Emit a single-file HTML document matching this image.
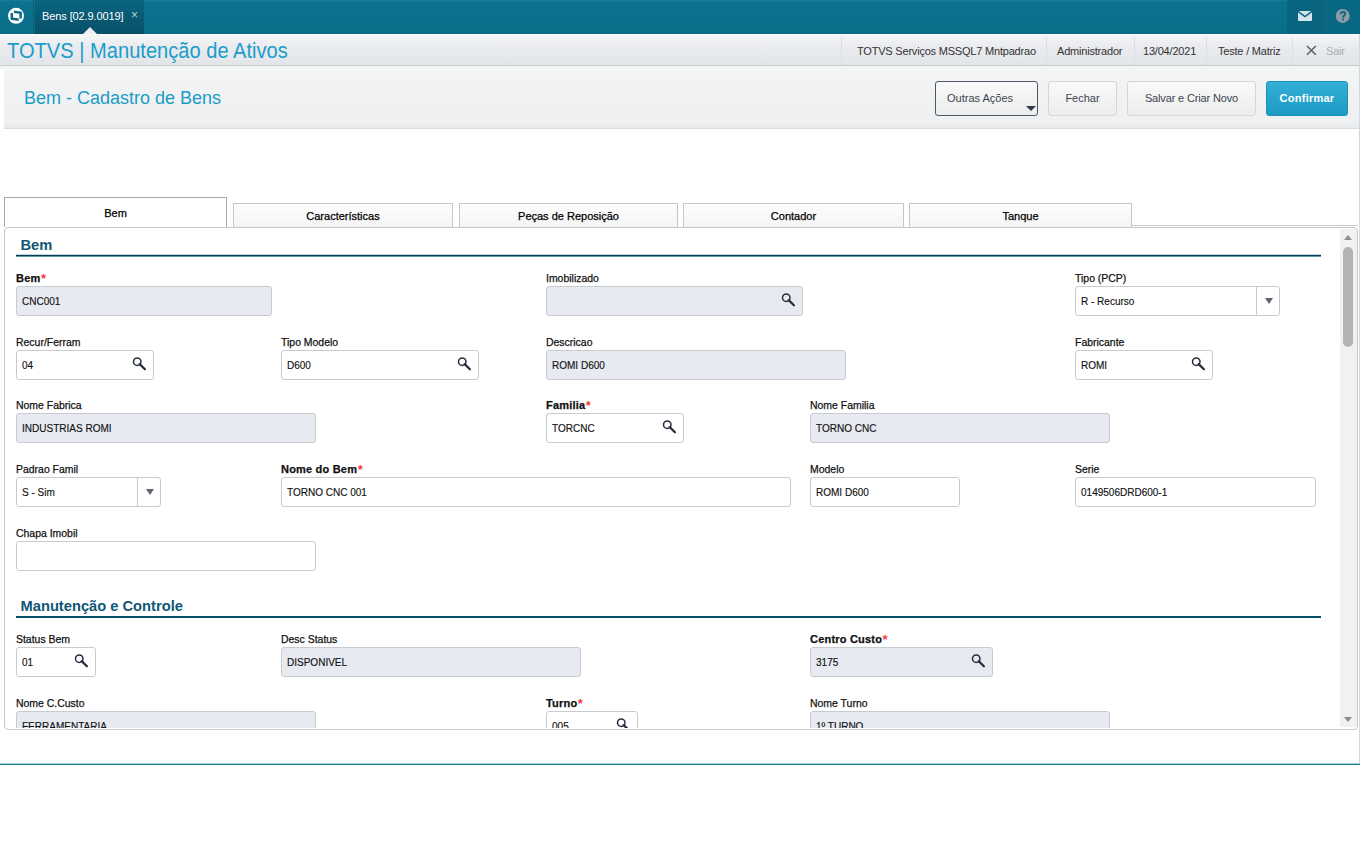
<!DOCTYPE html>
<html><head><meta charset="utf-8">
<style>
*{box-sizing:border-box;margin:0;padding:0}
html,body{width:1360px;height:850px;overflow:hidden;background:#fff;font-family:"Liberation Sans",sans-serif;color:#222}
.abs{position:absolute}
#topbar{position:absolute;left:0;top:0;width:1360px;height:34px;background:linear-gradient(#1a7e97,#0b718c 2px,#0a6e89)}
#logo{position:absolute;left:0;top:0;width:34px;height:34px;background:linear-gradient(#1a7e97,#0b718c 2px,#0a6e89);border-right:1px solid #0a5e76}
#acttab{position:absolute;left:35px;top:0;width:109px;height:34px;background:linear-gradient(#0b6580,#074f67)}
#acttab span{position:absolute;left:7px;top:10px;font-size:11px;color:#fff;letter-spacing:-0.1px}
#acttab i{position:absolute;left:96px;top:8px;font-style:normal;font-size:12px;color:#b8ccd4}
#ptr{position:absolute;left:48px;top:27px;width:0;height:0;border-left:7px solid transparent;border-right:7px solid transparent;border-bottom:7px solid #eceef0}
#mail{position:absolute;left:1287px;top:0;width:37px;height:34px;background:#076580;border-right:1px solid #2f5b68}
#help{position:absolute;left:1324px;top:0;width:36px;height:34px;background:#086884}
#titlebar{position:absolute;left:0;top:34px;width:1360px;height:32px;background:linear-gradient(#f6f7f8,#e9ebee 40%,#e3e6e9);border-bottom:1px solid #c9cdd0}
#gap{position:absolute;left:0;top:66px;width:1360px;height:3px;background:#f3f4f5}
#titlebar .t{position:absolute;left:7px;top:5px;font-size:21.5px;color:#1a9dca;transform:scaleX(.935);transform-origin:0 0;white-space:nowrap}
.ti{position:absolute;top:11px;font-size:11px;color:#333;letter-spacing:-0.2px}
.sep{position:absolute;top:3px;width:1px;height:28px;background:#dcdee0}
#hdr{position:absolute;left:4px;top:66px;width:1356px;height:63px;background:linear-gradient(#f3f4f4,#eff0f1 90%,#e8eaea);border-bottom:1px solid #dcdede;border-top-left-radius:3px}
#hdr .t{position:absolute;left:20px;top:22px;font-size:18px;color:#1b9cc8}
.btn{position:absolute;top:15px;height:35px;border:1px solid #d4d6d8;border-radius:3px;background:linear-gradient(#f9f9f9,#eceded);font-size:11px;color:#3d4350;text-align:center;line-height:33px}
#tabs .tab,#tabs2 .tab{position:absolute;top:203px;height:25px;border:1px solid #c6c6c6;border-bottom:none;background:linear-gradient(#fdfdfd,#f4f4f4);font-size:11px;text-align:center;line-height:24px;color:#000}
#tabs2 .tab.act{top:197px;height:30px;background:#fff;border-color:#a9a9a9;line-height:30px}
#panel{position:absolute;left:4px;top:227px;width:1354px;height:503px;border:1px solid #c8c8c8;border-radius:4px;background:#fff;overflow:hidden}
#clipin{position:absolute;left:0;top:0;width:1352px;height:500px;overflow:hidden}
#stripline{position:absolute;left:1132px;top:225px;width:226px;height:1px;background:#c8cacc}
#rline{position:absolute;left:1359px;top:34px;width:1px;height:730px;background:#c6dde5}
.sec{position:absolute;left:16px;width:1305px;height:2px;background:#0b4b66}
.sect{position:absolute;left:20.5px;font-size:14.7px;font-weight:bold;color:#0f5775;margin-top:1px}
.lbl{position:absolute;font-size:11px;color:#111;transform:scaleX(.95);transform-origin:0 0;white-space:nowrap;margin-top:1.6px;line-height:13px}
.lbl.b{font-weight:bold;transform:none;letter-spacing:0.2px;margin-top:1.6px}
.lbl .r{color:#f23b3b;font-size:13px;-webkit-text-stroke:0;line-height:0;position:relative;top:1px;margin-left:0.5px;letter-spacing:0}
.inp{position:absolute;height:30px;border:1px solid #c8cccf;border-radius:3px;background:#fff;font-size:11px;line-height:27px;padding-left:4.5px;color:#111}
.v{display:inline-block;transform:scaleX(.91);transform-origin:0 0;white-space:nowrap;position:relative;top:0.5px}
.inp.d{background:#e7eaf1}
.srch{position:absolute;right:7px;top:6px;width:14px;height:14px}
.sel .arr{position:absolute;right:0;top:0;width:23px;height:28px;border-left:1px solid #c9cbcd}
.sel .arr:after{content:"";position:absolute;left:8px;top:11px;border-left:4.5px solid transparent;border-right:4.5px solid transparent;border-top:6px solid #5f6672}
#bottomline{position:absolute;left:0;top:763px;width:1360px;height:2px;background:linear-gradient(#a9cfd8 50%,#1b7c95 50%)}
.lbl,.tab{-webkit-text-stroke:0.25px currentColor}
.v{-webkit-text-stroke:0.15px currentColor}
</style></head><body>
<div id="topbar"></div>
<div id="logo"><svg width="34" height="34" viewBox="0 0 34 34"><circle cx="16" cy="15.8" r="8" fill="#fff"/><path d="M13.9 10.6 L21.9 11.8 L21.8 18.6 L19.3 18.5 L19.4 13.8 L13.9 13.1 Z" fill="#0a6a85"/><path d="M10.5 13 L13.1 13.1 L13 17.6 L18.8 18.4 L18.7 20.9 L10.6 19.8 Z" fill="#0a6a85"/></svg></div>
<div id="acttab"><span>Bens [02.9.0019]</span><i>×</i><div id="ptr"></div></div>
<div id="mail"><svg width="36" height="34" viewBox="0 0 36 34"><rect x="11" y="11" width="14" height="10" rx="1" fill="#d3e5eb"/><path d="M11 11.3 L18 16.5 L25 11.3" fill="none" stroke="#076580" stroke-width="1.5"/></svg></div>
<div id="help"><svg width="36" height="34" viewBox="0 0 36 34"><circle cx="18.7" cy="15.9" r="7" fill="#8e9ba6"/><path d="M16.7 14.3 C16.7 12.6 17.7 12 18.9 12 C20.3 12 21.1 12.8 21.1 13.9 C21.1 15.2 19.9 15.6 19.3 16.4 C19 16.8 19 17.2 19 17.7" fill="none" stroke="#076a86" stroke-width="1.8"/><rect x="18.05" y="18.6" width="1.9" height="1.8" fill="#076a86"/></svg></div>

<div id="titlebar"><div class="t">TOTVS | Manutenção de Ativos</div>
<div class="sep" style="left:841px"></div>
<div class="ti" style="left:857px">TOTVS Serviços MSSQL7 Mntpadrao</div>
<div class="sep" style="left:1046px"></div>
<div class="ti" style="left:1057px">Administrador</div>
<div class="sep" style="left:1134px"></div>
<div class="ti" style="left:1143px">13/04/2021</div>
<div class="sep" style="left:1206px"></div>
<div class="ti" style="left:1218px">Teste / Matriz</div>
<div class="sep" style="left:1292px"></div>
<svg style="position:absolute;left:1305px;top:10px" width="12" height="12" viewBox="0 0 12 12"><path d="M2 2 L10.8 10.8 M10.8 2 L2 10.8" stroke="#5b6370" stroke-width="1.6"/></svg>
<div class="ti" style="left:1326px;color:#a9aeb3">Sair</div>
</div>

<div id="gap"></div><div id="hdr"><div class="t">Bem - Cadastro de Bens</div>
<div class="btn" style="left:931px;width:103px;border-color:#4f5665;text-align:left;padding-left:11px">Outras Ações<div style="position:absolute;left:90px;top:24px;border-left:5px solid transparent;border-right:5px solid transparent;border-top:5px solid #2f3a4a"></div></div>
<div class="btn" style="left:1044px;width:69px">Fechar</div>
<div class="btn" style="left:1123px;width:129px;letter-spacing:-0.15px">Salvar e Criar Novo</div>
<div class="btn" style="left:1262px;width:82px;background:linear-gradient(#35afd6,#1b9bc4);border-color:#1a93bc;color:#fff;font-weight:bold;letter-spacing:0.25px">Confirmar</div>
</div>

<div id="tabs">
<div class="tab" style="left:233px;width:220px">Características</div>
<div class="tab" style="left:459px;width:219px">Peças de Reposição</div>
<div class="tab" style="left:683px;width:221px">Contador</div>
<div class="tab" style="left:909px;width:223px">Tanque</div>
</div>
<div id="stripline"></div><div id="rline"></div><div id="panel"><div id="clipin"><div id="form" style="position:absolute;left:-5px;top:-228px;width:1360px;height:850px"><div class="sect" style="top:236px">Bem</div><div class="sec" style="top:255px;background:linear-gradient(#063b56 50%,#5f98a6 50%);box-shadow:0 -1px 0 #c2d8de"></div>
<div class="lbl b" style="left:16px;top:270px">Bem<span class="r">*</span></div><div class="inp d" style="left:16px;top:286px;width:256px"><span class="v">CNC001</span></div>
<div class="lbl" style="left:546px;top:270px">Imobilizado</div><div class="inp d" style="left:546px;top:286px;width:257px"><svg class="srch" viewBox="0 0 14 14"><circle cx="5.25" cy="4.65" r="3.75" fill="none" stroke="#262d3f" stroke-width="1.5"/><path d="M7.7 7.1 L12.9 12.3" stroke="#262d3f" stroke-width="2.2" stroke-linecap="round"/></svg></div>
<div class="lbl" style="left:1075px;top:270px">Tipo (PCP)</div><div class="inp sel" style="left:1075px;top:286px;width:205px"><span class="v">R - Recurso</span><div class="arr"></div></div>
<div class="lbl" style="left:16px;top:334px">Recur/Ferram</div><div class="inp" style="left:16px;top:350px;width:138px"><span class="v">04</span><svg class="srch" viewBox="0 0 14 14"><circle cx="5.25" cy="4.65" r="3.75" fill="none" stroke="#262d3f" stroke-width="1.5"/><path d="M7.7 7.1 L12.9 12.3" stroke="#262d3f" stroke-width="2.2" stroke-linecap="round"/></svg></div>
<div class="lbl" style="left:281px;top:334px">Tipo Modelo</div><div class="inp" style="left:281px;top:350px;width:198px"><span class="v">D600</span><svg class="srch" viewBox="0 0 14 14"><circle cx="5.25" cy="4.65" r="3.75" fill="none" stroke="#262d3f" stroke-width="1.5"/><path d="M7.7 7.1 L12.9 12.3" stroke="#262d3f" stroke-width="2.2" stroke-linecap="round"/></svg></div>
<div class="lbl" style="left:546px;top:334px">Descricao</div><div class="inp d" style="left:546px;top:350px;width:300px"><span class="v">ROMI D600</span></div>
<div class="lbl" style="left:1075px;top:334px">Fabricante</div><div class="inp" style="left:1075px;top:350px;width:138px"><span class="v">ROMI</span><svg class="srch" viewBox="0 0 14 14"><circle cx="5.25" cy="4.65" r="3.75" fill="none" stroke="#262d3f" stroke-width="1.5"/><path d="M7.7 7.1 L12.9 12.3" stroke="#262d3f" stroke-width="2.2" stroke-linecap="round"/></svg></div>
<div class="lbl" style="left:16px;top:397px">Nome Fabrica</div><div class="inp d" style="left:16px;top:413px;width:300px"><span class="v">INDUSTRIAS ROMI</span></div>
<div class="lbl b" style="left:546px;top:397px">Familia<span class="r">*</span></div><div class="inp" style="left:546px;top:413px;width:138px"><span class="v">TORCNC</span><svg class="srch" viewBox="0 0 14 14"><circle cx="5.25" cy="4.65" r="3.75" fill="none" stroke="#262d3f" stroke-width="1.5"/><path d="M7.7 7.1 L12.9 12.3" stroke="#262d3f" stroke-width="2.2" stroke-linecap="round"/></svg></div>
<div class="lbl" style="left:810px;top:397px">Nome Familia</div><div class="inp d" style="left:810px;top:413px;width:300px"><span class="v">TORNO CNC</span></div>
<div class="lbl" style="left:16px;top:461px">Padrao Famil</div><div class="inp sel" style="left:16px;top:477px;width:145px"><span class="v">S - Sim</span><div class="arr"></div></div>
<div class="lbl b" style="left:281px;top:461px">Nome do Bem<span class="r">*</span></div><div class="inp" style="left:281px;top:477px;width:510px"><span class="v">TORNO CNC 001</span></div>
<div class="lbl" style="left:810px;top:461px">Modelo</div><div class="inp" style="left:810px;top:477px;width:150px"><span class="v">ROMI D600</span></div>
<div class="lbl" style="left:1075px;top:461px">Serie</div><div class="inp" style="left:1075px;top:477px;width:241px"><span class="v">0149506DRD600-1</span></div>
<div class="lbl" style="left:16px;top:525px">Chapa Imobil</div><div class="inp" style="left:16px;top:541px;width:300px"></div>
<div class="sect" style="top:597px">Manutenção e Controle</div><div class="sec" style="top:616px;background:#064f6a"></div>
<div class="lbl" style="left:16px;top:631px">Status Bem</div><div class="inp" style="left:16px;top:647px;width:80px"><span class="v">01</span><svg class="srch" viewBox="0 0 14 14"><circle cx="5.25" cy="4.65" r="3.75" fill="none" stroke="#262d3f" stroke-width="1.5"/><path d="M7.7 7.1 L12.9 12.3" stroke="#262d3f" stroke-width="2.2" stroke-linecap="round"/></svg></div>
<div class="lbl" style="left:281px;top:631px">Desc Status</div><div class="inp d" style="left:281px;top:647px;width:300px"><span class="v">DISPONIVEL</span></div>
<div class="lbl b" style="left:810px;top:631px">Centro Custo<span class="r">*</span></div><div class="inp d" style="left:810px;top:647px;width:183px"><span class="v">3175</span><svg class="srch" viewBox="0 0 14 14"><circle cx="5.25" cy="4.65" r="3.75" fill="none" stroke="#262d3f" stroke-width="1.5"/><path d="M7.7 7.1 L12.9 12.3" stroke="#262d3f" stroke-width="2.2" stroke-linecap="round"/></svg></div>
<div class="lbl" style="left:16px;top:695px">Nome C.Custo</div><div class="inp d" style="left:16px;top:711px;width:300px"><span class="v">FERRAMENTARIA</span></div>
<div class="lbl b" style="left:546px;top:695px">Turno<span class="r">*</span></div><div class="inp" style="left:546px;top:711px;width:92px"><span class="v">005</span><svg class="srch" viewBox="0 0 14 14"><circle cx="5.25" cy="4.65" r="3.75" fill="none" stroke="#262d3f" stroke-width="1.5"/><path d="M7.7 7.1 L12.9 12.3" stroke="#262d3f" stroke-width="2.2" stroke-linecap="round"/></svg></div>
<div class="lbl" style="left:810px;top:695px">Nome Turno</div><div class="inp d" style="left:810px;top:711px;width:300px"><span class="v">1º TURNO</span></div></div></div><div id="sb" style="position:absolute;left:1335px;top:1px;width:17px;height:498px;background:#f1f1f1"><div style="position:absolute;left:3px;top:18px;width:10px;height:100px;border-radius:5px;background:#b3b3b3"></div><div style="position:absolute;left:3.5px;top:5.5px;border-left:4px solid transparent;border-right:4px solid transparent;border-bottom:5px solid #8d8d8d"></div><div style="position:absolute;left:3.5px;bottom:5px;border-left:4px solid transparent;border-right:4px solid transparent;border-top:5px solid #8d8d8d"></div></div></div>
<div id="tabs2"><div class="tab act" style="left:4px;width:223px">Bem</div></div>
<div id="bottomline"></div>
</body></html>
